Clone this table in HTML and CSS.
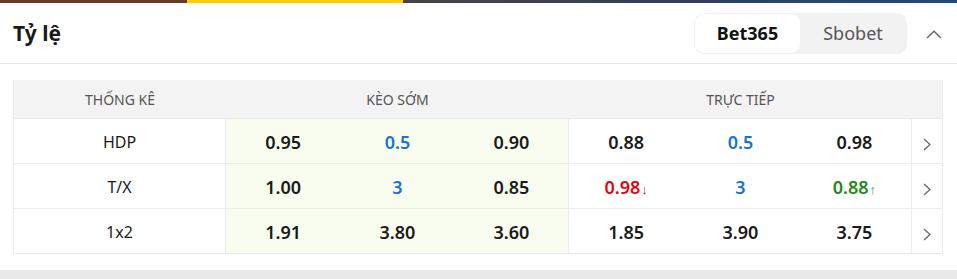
FILE: index.html
```html
<!DOCTYPE html>
<html lang="vi">
<head>
<meta charset="utf-8">
<title>Tỷ lệ</title>
<link rel="stylesheet" href="styles.css">
</head>
<body>
<div class="topbar">
  <span class="seg seg-brown"></span>
  <span class="seg seg-yellow"></span>
  <span class="seg seg-dark"></span>
</div>
<header class="head">
  <h2 class="title">Tỷ lệ</h2>
  <div class="head-right">
    <div class="toggle">
      <button class="tab active">Bet365</button>
      <button class="tab">Sbobet</button>
    </div>
    <svg class="collapse" width="16" height="9" viewBox="0 0 16 9"><path d="M1 8 L8 1.2 L15 8" fill="none" stroke="#666" stroke-width="1.4"/></svg>
  </div>
</header>
<section class="odds">
  <div class="row hrow">
    <div class="hcell c1">THỐNG KÊ</div>
    <div class="hcell g3">KÈO SỚM</div>
    <div class="hcell g3">TRỰC TIẾP</div>
    <div class="hcell"></div>
  </div>
  <div class="row">
    <div class="cell label">HDP</div>
    <div class="cell early">0.95</div>
    <div class="cell early blue">0.5</div>
    <div class="cell early endgrp">0.90</div>
    <div class="cell">0.88</div>
    <div class="cell blue">0.5</div>
    <div class="cell endgrp">0.98</div>
    <div class="cell more"><svg width="8" height="13" viewBox="0 0 8 13"><path d="M1 1 L7 6.5 L1 12" fill="none" stroke="#666" stroke-width="1.3"/></svg></div>
  </div>
  <div class="row">
    <div class="cell label">T/X</div>
    <div class="cell early">1.00</div>
    <div class="cell early blue">3</div>
    <div class="cell early endgrp">0.85</div>
    <div class="cell red">0.98<span class="arr">↓</span></div>
    <div class="cell blue">3</div>
    <div class="cell green endgrp">0.88<span class="arr">↑</span></div>
    <div class="cell more"><svg width="8" height="13" viewBox="0 0 8 13"><path d="M1 1 L7 6.5 L1 12" fill="none" stroke="#666" stroke-width="1.3"/></svg></div>
  </div>
  <div class="row">
    <div class="cell label">1x2</div>
    <div class="cell early">1.91</div>
    <div class="cell early">3.80</div>
    <div class="cell early endgrp">3.60</div>
    <div class="cell">1.85</div>
    <div class="cell">3.90</div>
    <div class="cell endgrp">3.75</div>
    <div class="cell more"><svg width="8" height="13" viewBox="0 0 8 13"><path d="M1 1 L7 6.5 L1 12" fill="none" stroke="#666" stroke-width="1.3"/></svg></div>
  </div>
</section>
<div class="band"></div>
</body>
</html>
```

FILE: styles.css
```css
* { box-sizing: border-box; }
html, body { margin: 0; padding: 0; background: #fff; }
body {
  font-family: "Noto Sans", "Open Sans", sans-serif;
  color: #1a1a1a;
  width: 957px;
}
.topbar { display: flex; height: 3px; }
.seg { display: block; height: 3px; }
.seg-brown { width: 187px; background: #6b3b23; }
.seg-yellow { width: 216px; background: #ffcc00; }
.seg-dark { flex: 1; background: linear-gradient(90deg, #4a4448 0%, #353f55 45%, #1e4a7c 100%); }

.head {
  height: 61px;
  border-bottom: 1px solid #e6e6e6;
  display: flex;
  align-items: center;
  justify-content: space-between;
  padding: 0 15px 0 13px;
}
.title { margin: 0; font-size: 21px; font-weight: 700; color: #1a1a1a; }
.head-right { display: flex; align-items: center; gap: 19px; }
.toggle {
  display: flex;
  width: 213px;
  height: 41px;
  padding: 1px;
  background: #f2f2f2;
  border-radius: 10px;
}
.tab {
  flex: 1;
  border: 0;
  background: transparent;
  font-family: inherit;
  font-size: 18px;
  color: #555;
  border-radius: 9px;
  padding: 0;
  cursor: pointer;
}
.tab.active { background: #fff; color: #111; font-weight: 700; flex: 0 0 105px; }
.collapse { display: block; margin-top: 2px; }

.odds {
  margin: 16px 14px 0 13px;
  border-left: 1px solid #ececec;
  border-right: 1px solid #ececec;
}
.row {
  display: grid;
  grid-template-columns: 212px repeat(6, 1fr) 30px;
  height: 45px;
  border-bottom: 1px solid #ececec;
}
.hrow { height: 39px; background: #f3f3f3; border-bottom: 1px solid #e8e8e8; }
.hcell {
  display: flex; align-items: center; justify-content: center;
  font-size: 14px; color: #555;
}
.hcell.g3 { grid-column: span 3; }
.cell {
  display: flex; align-items: center; justify-content: center;
  font-size: 18px; font-weight: 600; color: #1a1a1a;
  padding-top: 2px;
}
.cell.label { font-weight: 400; font-size: 16px; border-right: 1px solid #ececec; }
.cell.early { background: #f9fdef; }
.cell.endgrp { border-right: 1px solid #ececec; }
.blue { color: #1576cf !important; }
.red { color: #e5050f !important; }
.green { color: #1e8a1a !important; }
.arr { font-size: 13px; font-weight: 400; margin-left: 1px; margin-top: 4px; }
.cell.more { padding-top: 6px; }
.cell.more svg { display: block; }
.band { margin-top: 16px; height: 9px; background: #e9e9e9; }
```
